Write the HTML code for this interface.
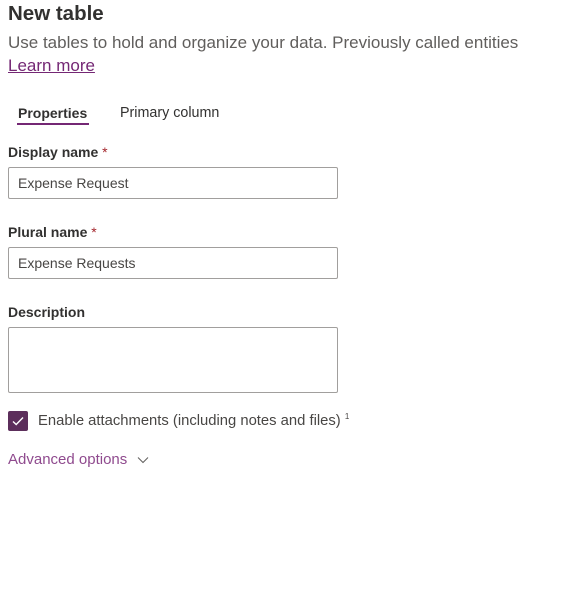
<!DOCTYPE html>
<html><head><style>
body{margin:0;width:572px;height:609px;background:#fff;font-family:"Liberation Sans",sans-serif;position:relative;overflow:hidden}
.a{position:absolute;white-space:nowrap}
.lbl{font-size:14px;font-weight:bold;color:#323130}
.lbl span{color:#a4262c;font-weight:normal}
.inp{position:absolute;left:8px;width:330px;height:32px;border:1px solid #a19f9d;border-radius:2px;box-sizing:border-box;font-size:14px;color:#484644;padding-left:9px;line-height:30px}
</style></head><body>
<div class="a" style="left:8px;top:2px;font-size:20.5px;font-weight:bold;color:#323130">New table</div>
<div class="a" style="left:8px;top:33px;font-size:17px;color:#605e5c">Use tables to hold and organize your data. Previously called entities</div>
<div class="a" style="left:8px;top:56px;font-size:17px;color:#742774;text-decoration:underline">Learn more</div>
<div class="a" style="left:18px;top:105px;font-size:14px;color:#323130;font-weight:bold">Properties</div>
<div class="a" style="left:17px;top:123px;width:72px;height:2px;background:#742774"></div>
<div class="a" style="left:120px;top:105px;font-size:14.3px;color:#323130">Primary column</div>
<div class="a lbl" style="left:8px;top:144px">Display name <span>*</span></div>
<div class="inp" style="top:167px">Expense Request</div>
<div class="a lbl" style="left:8px;top:224px">Plural name <span>*</span></div>
<div class="inp" style="top:247px">Expense Requests</div>
<div class="a lbl" style="left:8px;top:304px">Description</div>
<div class="inp" style="top:327px;height:66px"></div>
<div class="a" style="left:8px;top:411px;width:20px;height:20px;background:#5c2e5b;border-radius:2px">
<svg width="20" height="20" viewBox="0 0 20 20"><path d="M5 10.5l3.2 3L15 6.5" stroke="#fff" stroke-width="1.4" fill="none"/></svg></div>
<div class="a" style="left:38px;top:412px;font-size:14.8px;color:#484644">Enable attachments (including notes and files) <sup style="font-size:8px">1</sup></div>
<div class="a" style="left:8px;top:451px;font-size:15px;color:#8f4a8e">Advanced options <svg width="12" height="8" viewBox="0 0 12 8" style="margin-left:6px"><path d="M1 1.5l5 5 5-5" stroke="#605e5c" fill="none"/></svg></div>
</body></html>
